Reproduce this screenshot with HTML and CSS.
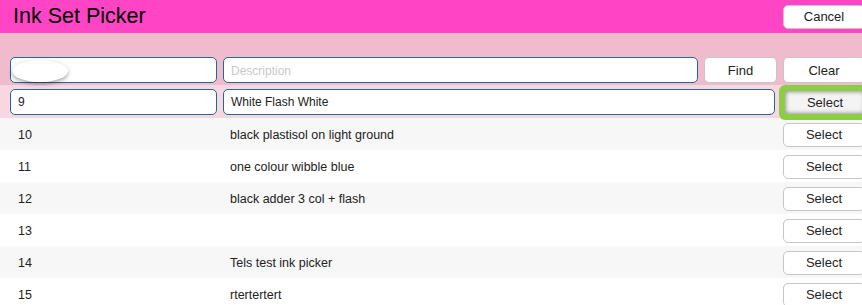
FILE: index.html
```html
<!doctype html>
<html lang="en">
<head>
  <meta charset="UTF-8" />
  <title>Ink Set Picker</title>
  <link rel="stylesheet" href="styles.css">
</head>
<body>
  <header class="topbar">
    <h1>Ink Set Picker</h1>
    <button class="btn btn-cancel">Cancel</button>
  </header>

  <div class="search-row grid">
    <div class="field"><span class="blob"></span></div>
    <input type="text" class="field" placeholder="Description" />
    <button class="btn">Find</button>
    <button class="btn">Clear</button>
  </div>

  <div class="edit-row grid">
    <input type="text" class="field" value="9" />
    <input type="text" class="field field-wide" value="White Flash White" />
    <button class="btn btn-active">Select</button>
  </div>

  <div class="list">
    <div class="row grid"><span class="num">10</span><span class="desc">black plastisol on light ground</span><button class="btn btn-select">Select</button></div>
    <div class="row grid"><span class="num">11</span><span class="desc">one colour wibble blue</span><button class="btn btn-select">Select</button></div>
    <div class="row grid"><span class="num">12</span><span class="desc">black adder 3 col + flash</span><button class="btn btn-select">Select</button></div>
    <div class="row grid"><span class="num">13</span><span class="desc"></span><button class="btn btn-select">Select</button></div>
    <div class="row grid"><span class="num">14</span><span class="desc">Tels test ink picker</span><button class="btn btn-select">Select</button></div>
    <div class="row grid"><span class="num">15</span><span class="desc">rtertertert</span><button class="btn btn-select">Select</button></div>
  </div>
</body>
</html>
```

FILE: styles.css
```css
* {
  box-sizing: border-box;
  margin: 0;
  padding: 0;
}

body {
  font-family: 'Liberation Sans', Arial, sans-serif;
  font-size: 12px;
  color: #222;
  background: #fff;
  width: 862px;
  overflow: hidden;
}

.topbar {
  height: 33px;
  background: #ff45c5;
  display: flex;
  align-items: center;
  justify-content: space-between;
  padding-left: 13px;
}

.topbar h1 {
  font-size: 21.5px;
  font-weight: normal;
  line-height: 33px;
  color: #000;
}

.grid {
  display: grid;
  grid-template-columns: 207px 475px 73px 82px;
  column-gap: 6px;
  padding-left: 10px;
  align-items: center;
}

.search-row {
  background: #efbbcd;
  padding-top: 24px;
  padding-bottom: 2px;
}

.edit-row {
  background: #f8d7e1;
  height: 33px;
}

.field {
  height: 26px;
  border: 1px solid #1f6b8f;
  border-radius: 5px;
  background: #fff;
  font-family: inherit;
  font-size: 12px;
  color: #222;
  padding: 1px 7px 0;
  outline: none;
  display: flex;
  align-items: center;
}

.field::placeholder {
  color: #c9c9c9;
}

.field-wide {
  grid-column: span 2;
  margin-right: 2px;
}

.blob {
  width: 56px;
  height: 22px;
  margin-left: -6px;
  border-radius: 50%;
  background: #fff;
  box-shadow: 0 2px 4px rgba(0, 0, 0, 0.35);
}

.btn {
  height: 26px;
  background: #fff;
  border: 1px solid #c6c6c6;
  border-radius: 5px;
  font-family: inherit;
  font-size: 13px;
  color: #222;
  cursor: pointer;
}

.btn-cancel {
  width: 82px;
  height: 24px;
  margin-right: -3px;
}

.btn-active {
  height: 23px;
  margin-top: 2px;
  margin-left: 2px;
  border: none;
  border-radius: 2px;
  position: relative;
  z-index: 1;
  background: #f4f4f4;
  box-shadow: inset 0 0 5px rgba(0, 0, 0, 0.55), 0 0 0 6px #8dcd45;
}

.row {
  height: 32px;
  padding-top: 1px;
}

.row:nth-child(odd) {
  background: #f7f7f7;
}

.num {
  padding-left: 8px;
  font-size: 12.5px;
}

.desc {
  padding-left: 7px;
  font-size: 12.5px;
}

.btn-select {
  grid-column: 4;
  height: 24px;
}
```
